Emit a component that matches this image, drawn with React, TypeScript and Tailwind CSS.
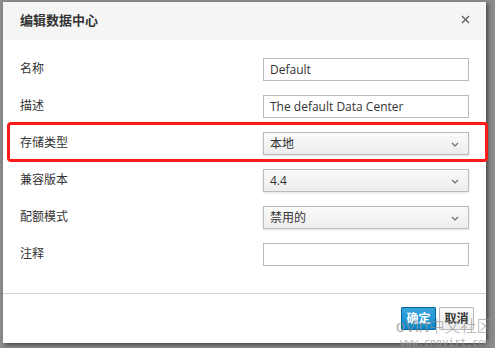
import React from "react";

const font = { fontFamily: '"Open Sans", "Noto Sans CJK SC", sans-serif' };

const Chevron = () => (
  <svg width="8" height="5" viewBox="0 0 8 5" className="absolute right-[9px] top-[9px]">
    <polyline points="1,1 4,4 7,1" fill="none" stroke="#666" strokeWidth="1.1" />
  </svg>
);

const TextBox = ({ value }: { value: string }) => (
  <div className="h-[23px] w-[206px] border border-[#bbbbbb] bg-white px-[6px] text-[12px] leading-[21px] text-[#333]">
    {value}
  </div>
);

const SelectBox = ({ value }: { value: string }) => (
  <div className="relative h-[23px] w-[206px] border border-[#bbbbbb] bg-gradient-to-b from-[#fafafa] to-[#ededed] px-[6px] text-[12px] leading-[21px] text-[#333] shadow-[0_1px_2px_rgba(0,0,0,0.12)]">
    {value}
    <Chevron />
  </div>
);

const Row = ({ label, children }: { label: string; children: React.ReactNode }) => (
  <div className="flex h-[23px] items-center justify-between">
    <span className="-mt-[2px] text-[12px] text-[#333]">{label}</span>
    {children}
  </div>
);

export default function App() {
  return (
    <div className="relative h-[348px] w-[495px] overflow-hidden bg-[#8c8c8c] pl-[3px] pt-[2px]" style={font}>
      <div className="flex h-[341px] w-[483px] flex-col bg-white shadow-[2px_2px_4px_rgba(0,0,0,0.5)]">
        <div className="flex h-[38px] items-center justify-between bg-[#f5f5f5] pl-[17px] pr-[16px]">
          <h2 className="text-[13px] font-semibold text-[#333]">编辑数据中心</h2>
          <svg width="9" height="9" viewBox="0 0 9 9" className="-mt-[4px]">
            <path d="M1 1 L8 8 M8 1 L1 8" stroke="#666" strokeWidth="1.5" />
          </svg>
        </div>
        <div className="flex flex-col gap-[14px] px-[17px] pt-[18px]">
          <Row label="名称">
            <TextBox value="Default" />
          </Row>
          <Row label="描述">
            <TextBox value="The default Data Center" />
          </Row>
          <Row label="存储类型">
            <SelectBox value="本地" />
          </Row>
          <Row label="兼容版本">
            <SelectBox value="4.4" />
          </Row>
          <Row label="配额模式">
            <SelectBox value="禁用的" />
          </Row>
          <Row label="注释">
            <TextBox value="" />
          </Row>
        </div>
        <div className="mt-[27px] border-t border-[#d1d1d1]" />
        <div className="flex justify-end gap-[3px] pr-[12px] pt-[13px]">
          <button className="h-[23px] w-[35px] rounded-[1px] border border-[#00659c] bg-gradient-to-b from-[#39a5dc] to-[#0088ce] text-[12px] font-semibold text-white">
            确定
          </button>
          <button className="h-[23px] w-[35px] rounded-[1px] border border-[#bbbbbb] bg-gradient-to-b from-[#fafafa] to-[#ededed] text-[12px] font-semibold text-[#333]">
            取消
          </button>
        </div>
      </div>

      {/* annotation around storage type row */}
      <div className="absolute left-[7px] top-[122px] h-[40px] w-[481px] rounded-[4px] border-[3px] border-[#ff1a1a]" />

      {/* watermark */}
      <span
        className="pointer-events-none absolute left-[396px] top-[318px] whitespace-nowrap text-[16px] font-light leading-[18px] text-[#8f8f8f]/75"
        style={{ fontFamily: '"Liberation Sans", "Noto Sans CJK SC", sans-serif' }}
      >
        oVirt中文社区
      </span>
      <span
        className="pointer-events-none absolute left-[400px] top-[337px] whitespace-nowrap text-[10px] leading-[12px] text-[#9a9a9a]/80"
        style={{ fontFamily: '"DejaVu Sans Mono", monospace' }}
      >
        www.cnovirt.com
      </span>
    </div>
  );
}
